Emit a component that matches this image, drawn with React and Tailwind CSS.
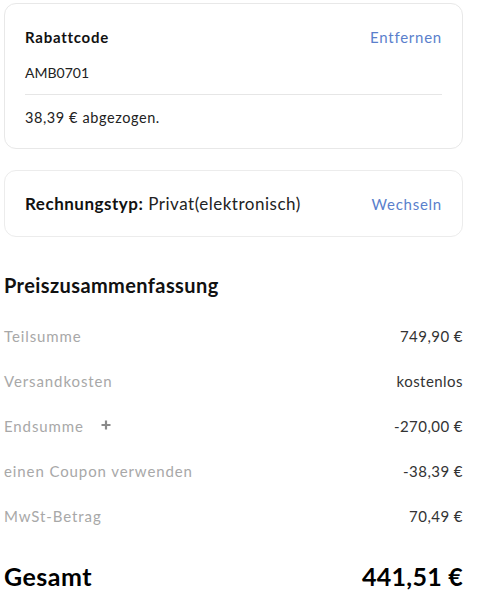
export default function App() {
  const rows = [
    { label: "Teilsumme", value: "749,90 €" },
    { label: "Versandkosten", value: "kostenlos" },
    { label: "Endsumme", value: "-270,00 €", plus: true },
    { label: "einen Coupon verwenden", value: "-38,39 €" },
    { label: "MwSt-Betrag", value: "70,49 €" },
  ];

  return (
    <div className="w-[481px] min-h-[612px] bg-white text-[#222] font-['Lato',sans-serif] pt-[3px] pl-[4px] pr-[18px]">
      {/* Discount card */}
      <div className="rounded-xl border border-[#e8e8e8] px-5 pt-[22px] pb-[20px]">
        <div className="flex items-center justify-between">
          <span className="text-[15px] font-bold tracking-[0.05em] text-[#111]">Rabattcode</span>
          <span className="text-[15px] tracking-[0.05em] text-[#5a7fcc]">Entfernen</span>
        </div>
        <div className="mt-[13px] text-[14px] text-[#222]">AMB0701</div>
        <div className="mt-[11px] border-t border-[#e6e6e6]" />
        <div className="mt-[12px] text-[14.5px] tracking-[0.04em] text-[#222]">38,39 € abgezogen.</div>
      </div>

      {/* Invoice type card */}
      <div className="mt-[21px] rounded-xl border border-[#ececec] px-5 h-[67px] flex items-center justify-between">
        <div className="text-[17px] tracking-[0.03em] text-[#222]">
          <span className="font-bold text-[#111]">Rechnungstyp:</span> Privat(elektronisch)
        </div>
        <span className="text-[15px] tracking-[0.05em] text-[#5a7fcc]">Wechseln</span>
      </div>

      {/* Price summary */}
      <h2 className="mt-[33px] text-[20px] font-bold tracking-[0.02em] text-[#111]">Preiszusammenfassung</h2>

      <div className="mt-[25px] flex flex-col gap-[23px]">
        {rows.map((r) => (
          <div key={r.label} className="flex items-center justify-between h-[22px] text-[15px]">
            <div className="flex items-center gap-[17px] tracking-[0.06em] text-[#a8a8a8]">
              <span>{r.label}</span>
              {r.plus && (
                <svg width="10" height="10" viewBox="0 0 10 10" className="mb-[3px]">
                  <path d="M5 0.5v9M0.5 5h9" stroke="#8a8a8a" strokeWidth="2.2" />
                </svg>
              )}
            </div>
            <span className="tracking-[0.03em] text-[#333]">{r.value}</span>
          </div>
        ))}
      </div>

      <div className="mt-[31px] flex items-center justify-between">
        <span className="text-[25px] font-bold tracking-[0.02em] text-[#000]">Gesamt</span>
        <span className="text-[25px] font-bold tracking-[0.01em] text-[#000]">441,51 €</span>
      </div>
    </div>
  );
}
